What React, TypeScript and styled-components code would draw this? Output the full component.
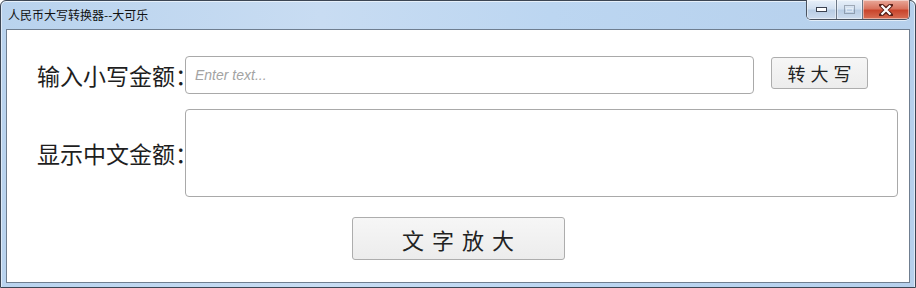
import React from "react";
import styled, { createGlobalStyle } from "styled-components";

const Global = createGlobalStyle`
  html, body { margin: 0; padding: 0; background: #ffffff; }
  body { font-family: "Noto Sans CJK SC", "Liberation Sans", sans-serif; }
  * { box-sizing: border-box; }
`;

const Window = styled.div`
  width: 916px;
  height: 288px;
  border: 1px solid #3c4654;
  border-radius: 6px 6px 0 0;
  padding: 0 5px 4px;
  display: flex;
  flex-direction: column;
  background: linear-gradient(to right, #b9d3ee 0%, #c8dcf2 35%, #bcd6f1 60%, #b6d0ec 100%);
  box-shadow: inset 0 1px 0 #e6f0fa, inset 1px 0 0 #dfeaf7, inset -1px 0 0 #dfeaf7;
`;

const TitleBar = styled.div`
  height: 28px;
  display: flex;
  align-items: flex-start;
  justify-content: space-between;
  padding-left: 2px;
`;

const Title = styled.div`
  font-family: "Noto Sans CJK SC", sans-serif;
  font-size: 12px;
  line-height: 12px;
  color: #111;
  margin-top: 8px;
`;

const Caption = styled.div`
  display: flex;
  margin-top: -1px;
  height: 20px;
  border: 1px solid #4a5360;
  border-top: none;
  border-radius: 0 0 5px 5px;
  overflow: hidden;
  box-shadow: 0 1px 0 rgba(255, 255, 255, 0.6);
`;

const CapBtn = styled.div<{ $w: number; $kind: "min" | "max" | "close" }>`
  width: ${(p) => p.$w}px;
  height: 100%;
  display: flex;
  align-items: center;
  justify-content: center;
  border-left: ${(p) => (p.$kind === "min" ? "none" : "1px solid #6b7786")};
  background: ${(p) =>
    p.$kind === "close"
      ? "linear-gradient(to bottom, #e9a99a 0%, #d9745f 45%, #c9452c 55%, #d86f55 100%)"
      : "linear-gradient(to bottom, #e8f0f9 0%, #d2e0f0 45%, #b9cde4 55%, #cddcee 100%)"};
  box-shadow: inset 0 0 0 1px rgba(255, 255, 255, 0.45);
`;

const Client = styled.div`
  flex: 1;
  background: #ffffff;
  border: 1px solid #6f7e90;
  display: flex;
  flex-direction: column;
  padding-top: 26px;
`;

const Row = styled.div<{ $align?: string }>`
  display: flex;
  align-items: ${(p) => p.$align || "center"};
  padding-left: 30px;
  padding-right: 11px;
`;

const Label = styled.div`
  width: 148px;
  flex: none;
  font-size: 23px;
  line-height: 1;
  color: #1e1e1e;
  white-space: nowrap;
  position: relative;
  z-index: 1;
`;

const TextInput = styled.input`
  flex: 1;
  height: 38px;
  border: 1px solid #a9a9a9;
  border-radius: 4px;
  padding: 0 9px;
  font-family: "Liberation Sans", Arial, sans-serif;
  font-size: 14px;
  outline: none;
  background: #fff;
  &::placeholder {
    color: #a3a3a3;
    font-style: italic;
  }
`;

const TextArea = styled.textarea`
  flex: 1;
  height: 88px;
  border: 1px solid #a9a9a9;
  border-radius: 4px;
  resize: none;
  outline: none;
  background: #fff;
  margin: 0;
`;

const Button = styled.button<{ $w: number; $h: number; $fs: number; $ls: number }>`
  width: ${(p) => p.$w}px;
  height: ${(p) => p.$h}px;
  flex: none;
  border: 1px solid #adadad;
  border-radius: 3px;
  background: linear-gradient(to bottom, #f6f6f6, #ececec);
  font-family: "Noto Sans CJK SC", sans-serif;
  font-size: ${(p) => p.$fs}px;
  letter-spacing: ${(p) => p.$ls}px;
  padding: 0 0 0 ${(p) => p.$ls}px;
  color: #222;
  line-height: 1;
  display: flex;
  align-items: center;
  justify-content: center;
`;

const SideButton = styled(Button)`
  margin-left: 17px;
  margin-right: 30px;
  align-self: flex-start;
  margin-top: 1px;
`;

const Spacer = styled.div<{ $h: number }>`
  height: ${(p) => p.$h}px;
  flex: none;
`;

const Center = styled.div`
  display: flex;
  justify-content: center;
`;

export default function App() {
  return (
    <>
      <Global />
      <Window>
        <TitleBar>
          <Title>人民币大写转换器--大可乐</Title>
          <Caption>
            <CapBtn $w={29} $kind="min">
              <svg width="11" height="5" viewBox="0 0 11 5">
                <rect x="0.5" y="0.5" width="10" height="4" fill="#fff" stroke="#3b4250" />
              </svg>
            </CapBtn>
            <CapBtn $w={26} $kind="max">
              <svg width="11" height="9" viewBox="0 0 11 9" opacity="0.45">
                <rect x="0.5" y="0.5" width="10" height="8" fill="none" stroke="#56606e" />
                <rect x="2.5" y="3.5" width="6" height="3" fill="none" stroke="#fff" />
              </svg>
            </CapBtn>
            <CapBtn $w={47} $kind="close">
              <svg width="14" height="12" viewBox="0 0 14 12">
                <path
                  d="M2 1 L7 5 L12 1 M2 11 L7 7 L12 11 M2 1 L12 11 M12 1 L2 11"
                  stroke="#5a2018"
                  strokeWidth="4"
                  strokeLinecap="round"
                  fill="none"
                />
                <path d="M2.5 1.5 L11.5 10.5 M11.5 1.5 L2.5 10.5" stroke="#fff" strokeWidth="2.2" fill="none" />
              </svg>
            </CapBtn>
          </Caption>
        </TitleBar>
        <Client>
          <Row>
            <Label>输入小写金额：</Label>
            <TextInput placeholder="Enter text..." />
            <SideButton $w={97} $h={32} $fs={18} $ls={5}>
              转大写
            </SideButton>
          </Row>
          <Spacer $h={15} />
          <Row>
            <Label>显示中文金额：</Label>
            <TextArea readOnly />
          </Row>
          <Spacer $h={20} />
          <Center>
            <Button $w={213} $h={43} $fs={22} $ls={8}>
              文字放大
            </Button>
          </Center>
        </Client>
      </Window>
    </>
  );
}
